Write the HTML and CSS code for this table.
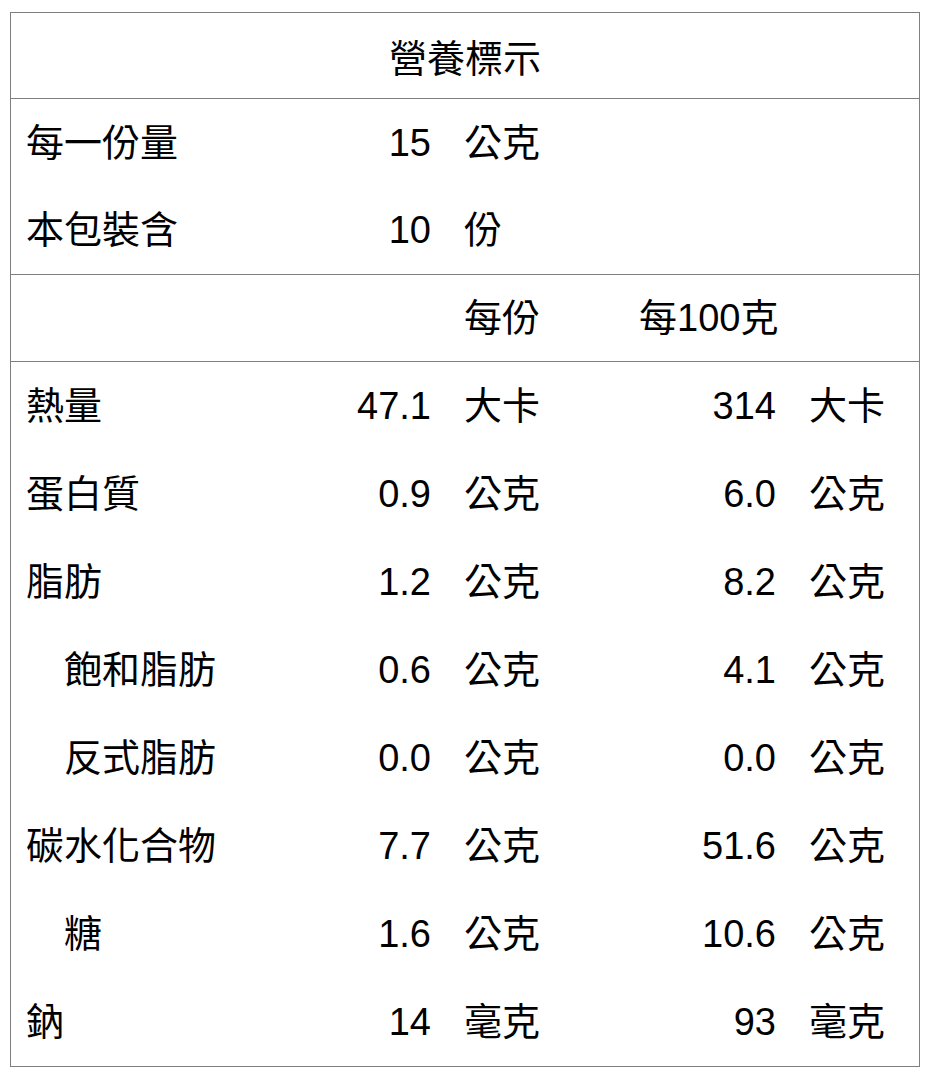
FILE: index.html
```html
<!DOCTYPE html>
<html lang="zh-Hant">
<head>
<meta charset="utf-8">
<link rel="stylesheet" href="styles.css">
</head>
<body>
<div class="label">
  <div class="title">營養標示</div>
  <div class="section">
    <div class="row serving"><span class="name">每一份量</span><span class="val">15</span><span class="unit">公克</span></div>
    <div class="row serving"><span class="name">本包裝含</span><span class="val">10</span><span class="unit">份</span></div>
  </div>
  <div class="row head"><span class="name"></span><span class="val"></span><span class="unit">每份</span><span class="val2">每100克</span><span class="unit2"></span></div>
  <div class="section">
    <div class="row"><span class="name">熱量</span><span class="val">47.1</span><span class="unit">大卡</span><span class="val2">314</span><span class="unit2">大卡</span></div>
    <div class="row"><span class="name">蛋白質</span><span class="val">0.9</span><span class="unit">公克</span><span class="val2">6.0</span><span class="unit2">公克</span></div>
    <div class="row"><span class="name">脂肪</span><span class="val">1.2</span><span class="unit">公克</span><span class="val2">8.2</span><span class="unit2">公克</span></div>
    <div class="row"><span class="name sub">飽和脂肪</span><span class="val">0.6</span><span class="unit">公克</span><span class="val2">4.1</span><span class="unit2">公克</span></div>
    <div class="row"><span class="name sub">反式脂肪</span><span class="val">0.0</span><span class="unit">公克</span><span class="val2">0.0</span><span class="unit2">公克</span></div>
    <div class="row"><span class="name">碳水化合物</span><span class="val">7.7</span><span class="unit">公克</span><span class="val2">51.6</span><span class="unit2">公克</span></div>
    <div class="row"><span class="name sub">糖</span><span class="val">1.6</span><span class="unit">公克</span><span class="val2">10.6</span><span class="unit2">公克</span></div>
    <div class="row"><span class="name">鈉</span><span class="val">14</span><span class="unit">毫克</span><span class="val2">93</span><span class="unit2">毫克</span></div>
  </div>
</div>
</body>
</html>
```
FILE: styles.css
```css
html, body {
  margin: 0;
  padding: 0;
  background: #fff;
}
body {
  padding: 12px 0 0 10px;
  font-family: "Liberation Sans", "Noto Sans CJK TC", sans-serif;
  font-size: 38px;
  color: #000;
}
.label {
  width: 908px;
  border: 1px solid #7f7f7f;
}
.title {
  height: 85px;
  display: flex;
  align-items: center;
  justify-content: center;
  border-bottom: 1px solid #7f7f7f;
}
.section {
  display: flex;
  flex-direction: column;
}
.row {
  display: grid;
  grid-template-columns: 200px 205px 208px 137px 107px;
  padding-left: 15px;
  height: 88px;
  align-items: center;
  line-height: 1;
}
.row.serving {
  height: 87.5px;
}
.row.head {
  height: 86px;
  border-top: 1px solid #7f7f7f;
  border-bottom: 1px solid #7f7f7f;
}
.name.sub {
  padding-left: 38px;
}
.val, .val2 {
  text-align: right;
  white-space: nowrap;
}
.unit, .unit2 {
  padding-left: 33px;
  white-space: nowrap;
}
```
